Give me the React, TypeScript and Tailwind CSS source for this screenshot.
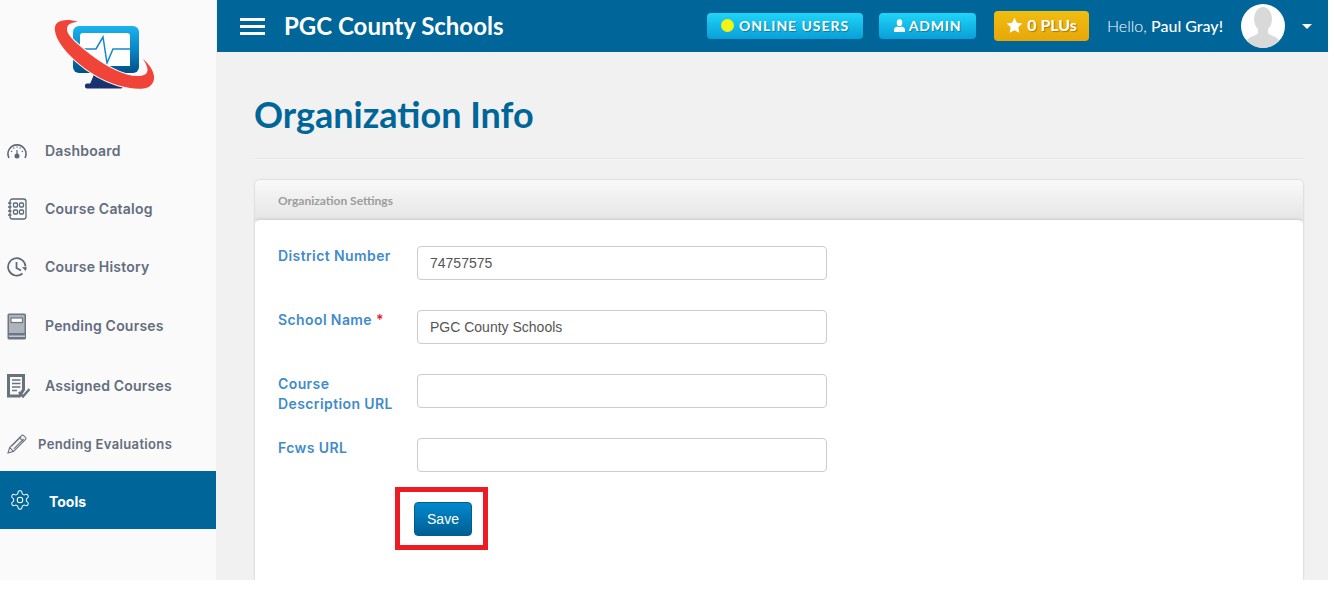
import React from "react";

const iconCls = "fill-none stroke-[#5d6778]";
const navCls = "ml-[18px] pb-[2px] font-['Inter',sans-serif] text-[14px] tracking-[0.2px] font-semibold text-[#636d7d]";

function Logo() {
  return (
    <svg viewBox="50 15 110 80" className="w-[110px] h-[80px] ml-[50px] mt-[15px]">
      <defs>
        <linearGradient id="mon" x1="0" y1="0" x2="0" y2="1">
          <stop offset="0" stopColor="#19b4f0" />
          <stop offset="0.5" stopColor="#0a86c4" />
          <stop offset="1" stopColor="#014f88" />
        </linearGradient>
      </defs>
      <path d="M95 72h16l6 12H90z" fill="#14376f" />
      <rect x="85" y="83.500" width="38" height="5" rx="2" fill="#1c2f6f" />
      <rect x="73" y="26" width="66" height="47" rx="6" fill="url(#mon)" />
      <path d="M83 33h44a3 3 0 0 1 3 3v30H80V36a3 3 0 0 1 3-3z" fill="#fff" />
      <path d="M81 49h15l7-12 4 26 6-14h17" fill="none" stroke="#1289c9" strokeWidth="1.500" />
      <path
        d="M78 22C66 18 53 20 55 31 57 48 88 76 117 85 135 90 152 92 154 79 155 72 149 64 143 59 149 68 150 75 140 76 125 77 108 67 95 58 82 48 66 36 67 29 67 24 72 22 78 22Z"
        fill="#f04438"
        stroke="#fafafa"
        strokeWidth="2"
        paintOrder="stroke"
      />
    </svg>
  );
}

const Gauge = () => (
  <svg viewBox="0 0 20 16" className={`w-[20px] h-[16px] ${iconCls}`} strokeWidth="1.600">
    <path d="M2 15A9 9 0 1 1 18 15" />
    <path d="M4 8l1.200 .8M6.500 4.500l.7 1.100M10 3.500v1.300M13.500 4.500l-.7 1.100M16 8l-1.200 .8" strokeWidth="1.100" />
    <path d="M10 7v5" strokeWidth="1.200" />
    <circle cx="10" cy="13" r="1.700" className="fill-[#5d6778]" />
  </svg>
);
const Catalog = () => (
  <svg viewBox="0 0 20 22" className={`w-[20px] h-[22px] ${iconCls}`} strokeWidth="1.300">
    <rect x="3" y="1" width="16" height="20" rx="2.500" />
    <path d="M1 5h3.500M1 9h3.500M1 13h3.500M1 17h3.500" strokeWidth="1.600" />
    <rect x="6.500" y="5" width="4" height="4" rx="1" />
    <rect x="12.500" y="5" width="4" height="4" rx="1" />
    <rect x="6.500" y="12" width="4" height="4" rx="1" />
    <rect x="12.500" y="12" width="4" height="4" rx="1" />
  </svg>
);
const History = () => (
  <svg viewBox="0 0 20 20" className={`w-[20px] h-[20px] ${iconCls}`} strokeWidth="1.700">
    <path d="M18.500 9.500A8.700 8.700 0 1 0 15.500 16.500" />
    <path d="M9.500 5v6l4.500 2.500" />
    <path d="M15.500 10.500l3 3 1-3z" className="fill-[#5d6778]" strokeWidth="0.600" />
  </svg>
);
const Book = () => (
  <svg viewBox="0 0 20 27" className="w-[20px] h-[27px]">
    <rect x="0.500" y="0.500" width="18.500" height="26" rx="1.500" fill="#6d7686" />
    <rect x="2" y="2" width="15.500" height="18" fill="#aeb3bc" />
    <rect x="4" y="5" width="11.500" height="4.500" fill="#fff" stroke="#6d7686" strokeWidth="1.200" />
    <rect x="2" y="22.500" width="16" height="1.400" fill="#cfd2d8" />
  </svg>
);
const Assigned = () => (
  <svg viewBox="0 0 23 24" className="w-[23px] h-[24px] shrink-0 ml-[2px]">
    <path d="M1.500 1.500h15v14l-4 6.500h-11z" fill="#fafafa" stroke="#69717f" strokeWidth="3" />
    <path d="M5 6h8.500M5 9.500h8.500M5 13h8.500M5 16.500h5" stroke="#69717f" strokeWidth="1.700" />
    <path d="M12 18l4 4.500 6.500-7.500" fill="none" stroke="#69717f" strokeWidth="2.400" />
  </svg>
);
const Pencil = () => (
  <svg viewBox="0 0 20 20" className="w-[20px] h-[20px] fill-none stroke-[#6f7887]" strokeWidth="1.100">
    <path d="M1 19l1.600-5.500L14.500 1.600a1.600 1.600 0 0 1 2.200 0l1.700 1.700a1.600 1.600 0 0 1 0 2.200L6.500 17.400z" />
    <path d="M2.600 13.500l3.900 3.900M12.500 3.600l3.900 3.900M4.400 12.400l9.800-9.800M6.800 14.800l9.800-9.800" />
  </svg>
);
const Gear = () => (
  <svg viewBox="0 0 24 24" className="w-[22px] h-[22px] shrink-0 fill-none stroke-white" strokeWidth="1.100">
    <path d="M12.220 2h-.44a2 2 0 0 0-2 2v.18a2 2 0 0 1-1 1.730l-.43.25a2 2 0 0 1-2 0l-.15-.08a2 2 0 0 0-2.730.73l-.22.38a2 2 0 0 0 .73 2.730l.15.1a2 2 0 0 1 1 1.720v.51a2 2 0 0 1-1 1.740l-.15.09a2 2 0 0 0-.73 2.730l.22.38a2 2 0 0 0 2.730.73l.15-.08a2 2 0 0 1 2 0l.43.25a2 2 0 0 1 1 1.730V20a2 2 0 0 0 2 2h.44a2 2 0 0 0 2-2v-.18a2 2 0 0 1 1-1.730l.43-.25a2 2 0 0 1 2 0l.15.08a2 2 0 0 0 2.730-.73l.22-.39a2 2 0 0 0-.73-2.730l-.15-.08a2 2 0 0 1-1-1.740v-.5a2 2 0 0 1 1-1.740l.15-.09a2 2 0 0 0 .73-2.730l-.22-.38a2 2 0 0 0-2.730-.73l-.15.08a2 2 0 0 1-2 0l-.43-.25a2 2 0 0 1-1-1.730V4a2 2 0 0 0-2-2z" />
    <circle cx="12" cy="12" r="3" />
  </svg>
);

function NavItem({ h, icon, label, labelCls }: { h: string; icon: React.ReactNode; label: string; labelCls: string }) {
  return (
    <div className={`flex items-center ${h}`}>
      <div className="w-[20px] ml-[7px] flex justify-center shrink-0">{icon}</div>
      <span className={labelCls}>{label}</span>
    </div>
  );
}

function Field({ label, value, req, cls }: { label: React.ReactNode; value?: string; req?: boolean; cls?: string }) {
  return (
    <div className={`flex items-start h-[34px] ${cls ?? ""}`}>
      <label className="w-[139px] shrink-0 pr-[10px] font-['Inter',sans-serif] text-[14px] tracking-[0.4px] leading-[20px] font-semibold text-[#428bca]">
        {label}
        {req && <span className="text-[#e8202a] ml-[4px]">*</span>}
      </label>
      <input
        readOnly
        value={value ?? ""}
        className="w-[410px] h-[34px] border border-[#ccc] rounded-[4px] bg-white px-[12px] font-['Liberation_Sans',sans-serif] text-[14px] text-[#555] outline-none"
      />
    </div>
  );
}

export default function App() {
  return (
    <div className="w-[1328px] h-[580px] flex overflow-hidden bg-[#f1f1f1]">
      <aside className="w-[216px] shrink-0 bg-[#fafafa]">
        <div className="h-[122px] overflow-hidden">
          <Logo />
        </div>
        <NavItem h="h-[58px]" icon={<Gauge />} label="Dashboard" labelCls={navCls} />
        <NavItem h="h-[58px]" icon={<Catalog />} label="Course Catalog" labelCls={navCls} />
        <NavItem h="h-[58px]" icon={<History />} label="Course History" labelCls={navCls} />
        <NavItem h="h-[60px]" icon={<Book />} label="Pending Courses" labelCls={navCls} />
        <NavItem h="h-[60px]" icon={<Assigned />} label="Assigned Courses" labelCls={navCls} />
        <NavItem h="h-[55px]" icon={<Pencil />} label="Pending Evaluations" labelCls="ml-[11px] pt-[2px] font-['Inter',sans-serif] text-[13px] tracking-[0.35px] font-semibold text-[#636d7d]" />
        <div className="flex items-center h-[58px] bg-[#006699]">
          <div className="ml-[10px] w-[20px] flex justify-center">
            <Gear />
          </div>
          <span className="ml-[19px] pt-[2px] font-['Inter',sans-serif] text-[14px] font-bold text-white">Tools</span>
        </div>
      </aside>

      <div className="w-[1px] shrink-0 bg-[#f1f1f1]" />

      <main className="flex-1 min-w-0">
        <header className="h-[52px] bg-[#006699] flex items-center font-['Lato',sans-serif] text-white">
          <div className="ml-[23px] w-[25px] flex flex-col gap-[4px]">
            <span className="h-[3px] bg-white" />
            <span className="h-[3px] bg-white" />
            <span className="h-[3px] bg-white" />
          </div>
          <h1 className="ml-[19px] text-[24px] font-bold leading-none">PGC County Schools</h1>

          <button className="ml-auto w-[156px] h-[26px] pb-[2px] rounded-[4px] bg-gradient-to-b from-[#1fd5f8] to-[#0a9fd8] flex items-center justify-center gap-[5px] text-[14px] font-bold tracking-[0.95px] [text-shadow:1px_1px_1px_rgba(0,0,0,0.3)]">
            <span className="w-[13px] h-[13px] rounded-full bg-[#f4f414]" />
            ONLINE USERS
          </button>
          <button className="ml-[16px] w-[97px] h-[26px] pb-[2px] rounded-[4px] bg-gradient-to-b from-[#1fd5f8] to-[#0a9fd8] flex items-center justify-center gap-[4px] text-[14px] font-bold tracking-[0.8px] [text-shadow:1px_1px_1px_rgba(0,0,0,0.3)]">
            <svg viewBox="0 0 12 14" className="w-[11px] h-[13px] fill-white">
              <ellipse cx="6" cy="4" rx="3" ry="3.800" />
              <path d="M0 14v-2.500C0 9.500 2 8.500 3.500 8c1.500 1 3.500 1 5 0C10 8.500 12 9.500 12 11.500V14z" />
            </svg>
            ADMIN
          </button>
          <button className="ml-[18px] w-[95px] h-[30px] pb-[2px] rounded-[4px] bg-gradient-to-b from-[#f0bd10] to-[#e8a708] flex items-center justify-center gap-[4px] text-[16px] font-bold [text-shadow:1px_1px_1px_rgba(0,0,0,0.3)]">
            <svg viewBox="0 0 24 24" className="w-[17px] h-[17px] fill-white">
              <path d="M12 1l3.400 7.200 7.600 1-5.600 5.400 1.400 7.800L12 18.600 5.200 22.400l1.400-7.800L1 9.200l7.600-1z" />
            </svg>
            0 PLUs
          </button>
          <span className="ml-[18px] text-[16px] font-light">
            Hello, <span className="font-medium">Paul Gray!</span>
          </span>
          <div className="ml-[18px] w-[44px] h-[44px] rounded-full bg-white overflow-hidden">
            <svg viewBox="0 0 44 44" className="w-full h-full">
              <ellipse cx="22" cy="15" rx="9" ry="12" fill="#d9d9d9" />
              <path d="M17 24v5c-2 3-8 3-11 7 4 6 10 8 16 8s12-2 16-8c-3-4-9-4-11-7v-5z" fill="#d9d9d9" />
            </svg>
          </div>
          <span className="ml-[17px] mr-[16px] w-0 h-0 border-x-[5px] border-x-transparent border-t-[5px] border-t-white" />
        </header>

        <div className="pl-[37px] pr-[24px]">
          <div className="h-[107px] border-b border-[#e6e6e6] shadow-[0_1px_0_#f8f8f8] flex items-start">
            <h2 className="mt-[40px] font-['Lato',sans-serif] text-[36px] leading-[44px] font-bold text-[#006699]">Organization Info</h2>
          </div>
          <section className="mt-[21px] ml-[1px] mr-[1px] h-[400px] rounded-t-[5px] shadow-[0_0_2px_rgba(0,0,0,0.25)] bg-white overflow-hidden">
            <div className="h-[41px] pl-[23px] flex items-center bg-gradient-to-b from-[#f9f9f9] to-[#e5e5e5] font-['Lato',sans-serif] text-[12px] font-bold text-[#9c9c9c]">
              Organization Settings
            </div>
            <div className="bg-white rounded-t-[5px] -mt-[1px] relative shadow-[0_-1px_3px_rgba(0,0,0,0.12)] pt-[26px] pl-[23px] h-[360px]">
              <Field label="District Number" value="74757575" cls="mb-[30px]" />
              <Field label="School Name" req value="PGC County Schools" cls="mb-[30px]" />
              <Field label={<>Course<br />Description URL</>} cls="mb-[30px]" />
              <Field label="Fcws URL" />
              <div className="mt-[15px] ml-[117px] w-[93px] h-[63px] border-[5px] border-[#ed1c24] pl-[14px] pt-[10px]">
                <button className="w-[58px] h-[34px] rounded-[4px] border border-[#005f8f] bg-gradient-to-b from-[#0089cc] to-[#005f95] font-['Liberation_Sans',sans-serif] text-[14px] text-white">
                  Save
                </button>
              </div>
            </div>
          </section>
        </div>
      </main>
    </div>
  );
}
